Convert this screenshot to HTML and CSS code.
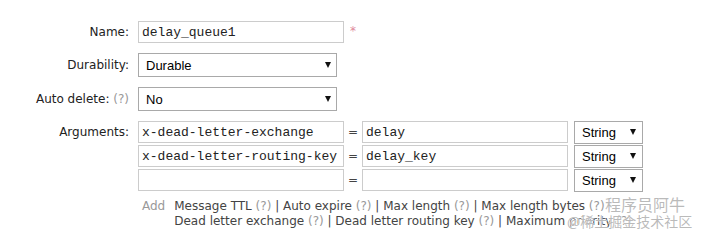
FILE: index.html
```html
<!DOCTYPE html>
<html>
  <head>
    <meta charset="utf-8">
    <title>Add a new queue</title>
    <link rel="stylesheet" href="styles.css">
  </head>
  <body>

    <div class="page">
      <div class="form">
        <label class="label">Name:</label>
        <div class="field">
          <input class="text" type="text" value="delay_queue1">
          <span class="req">*</span>
        </div>

        <label class="label">Durability:</label>
        <div class="field">
          <span class="pick">
            <select class="sel">
              <option>Durable</option>
              <option>Transient</option>
            </select>
          </span>
        </div>

        <label class="label">Auto delete: <span class="help">(?)</span></label>
        <div class="field">
          <span class="pick">
            <select class="sel">
              <option>No</option>
              <option>Yes</option>
            </select>
          </span>
        </div>

        <label class="label top">Arguments:</label>
        <div class="argbox">
          <div class="args">
            <input class="text" type="text" value="x-dead-letter-exchange">
            <span class="eq">=</span>
            <input class="text" type="text" value="delay">
            <span class="pick small"><select class="sel"><option>String</option><option>Number</option></select></span>

            <input class="text" type="text" value="x-dead-letter-routing-key">
            <span class="eq">=</span>
            <input class="text" type="text" value="delay_key">
            <span class="pick small"><select class="sel"><option>String</option><option>Number</option></select></span>

            <input class="text" type="text" value="">
            <span class="eq">=</span>
            <input class="text" type="text" value="">
            <span class="pick small"><select class="sel"><option>String</option><option>Number</option></select></span>
          </div>

          <div class="hint">
            <span class="add">Add</span>
            <span class="links">
              Message TTL <span class="help">(?)</span> | Auto expire <span class="help">(?)</span> | Max length <span class="help">(?)</span> | Max length bytes <span class="help">(?)</span><br>
              Dead letter exchange <span class="help">(?)</span> | Dead letter routing key <span class="help">(?)</span> | Maximum priority <span class="help">(?)</span>
            </span>
          </div>
        </div>
      </div>

      <!-- watermark from the source picture -->
      <div class="mark">
        <div class="mark-top">程序员阿牛</div>
        <div class="mark-bottom">@稀土掘金技术社区</div>
      </div>
    </div>

  </body>
</html>
```

FILE: styles.css
```css
body{
  margin: 0;
  background: #fff;
  font-family: "DejaVu Sans", Verdana, sans-serif;
  font-size: 12px;
  color: #222;
}

.page{
  position: relative;
  height: 244px;
  box-sizing: border-box;
  padding: 21px 0 0 8px;
  overflow: hidden;
}

.form{
  display: grid;
  grid-template-columns: 121px auto;
  column-gap: 9px;
  row-gap: 10px;
  align-items: center;
}

.label{
  text-align: right;
  white-space: nowrap;
}

.label.top{
  align-self: start;
  line-height: 23px;
}

.help{
  color: #999;
}

.field{
  display: flex;
  align-items: center;
}

.text{
  box-sizing: border-box;
  width: 206px;
  height: 22px;
  margin: 0;
  padding: 0 3px;
  border: 1px solid #ccc;
  font-family: "Liberation Mono", "Courier New", monospace;
  font-size: 13px;
  color: #222;
  outline: none;
}

.req{
  align-self: flex-start;
  margin: 3px 0 0 6px;
  color: #e08a9c;
  font-size: 12px;
}

.pick{
  position: relative;
  display: inline-block;
}

.pick::after{
  content: "";
  position: absolute;
  right: 6px;
  top: 9px;
  border-left: 3px solid transparent;
  border-right: 3px solid transparent;
  border-top: 6px solid #111;
  pointer-events: none;
}

.sel{
  -webkit-appearance: none;
  appearance: none;
  box-sizing: border-box;
  width: 199px;
  height: 24px;
  margin: 0;
  padding: 0 0 0 7px;
  border: 1px solid #a9a9a9;
  border-radius: 0;
  background: #fff;
  font-family: "Liberation Sans", Arial, sans-serif;
  font-size: 13px;
  color: #000;
  outline: none;
}

.argbox{
  display: flex;
  flex-direction: column;
}

.args{
  display: grid;
  grid-template-columns: 206px 18px 206px 75px;
  grid-auto-rows: 23px;
  row-gap: 1px;
  align-items: start;
}

.eq{
  text-align: center;
  line-height: 22px;
  color: #444;
}

.pick.small{
  margin-left: 6px;
}

.pick.small .sel{
  width: 69px;
  height: 23px;
}

.pick.small::after{
  right: 7px;
  top: 8px;
}

.hint{
  display: flex;
  margin-top: 7px;
  padding-left: 4px;
  line-height: 15px;
  white-space: nowrap;
}

.add{
  color: #999;
  margin-right: 9px;
}

.links{
  color: #444;
}

.mark{
  position: absolute;
  left: 567px;
  top: 196px;
  font-family: "Noto Sans CJK SC", sans-serif;
  color: rgba(140, 140, 140, 0.6);
  text-shadow: 0 0 2px #fff, 0 0 1px #fff, 0 0 1px #fff;
  line-height: 17px;
}

.mark-top{
  padding-left: 38px;
  font-size: 16px;
}

.mark-bottom{
  font-size: 14px;
}
```
